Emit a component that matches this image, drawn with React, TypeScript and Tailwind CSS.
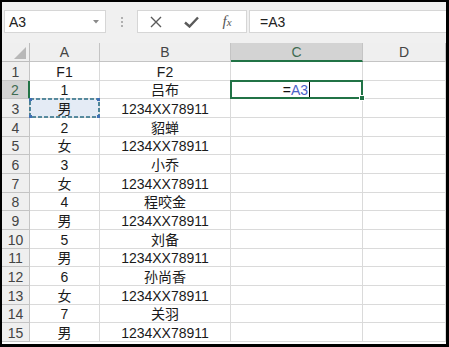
import React from 'react';

const rows: [string, string][] = [
  ['F1', 'F2'],
  ['1', '吕布'],
  ['男', '1234XX78911'],
  ['2', '貂蝉'],
  ['女', '1234XX78911'],
  ['3', '小乔'],
  ['女', '1234XX78911'],
  ['4', '程咬金'],
  ['男', '1234XX78911'],
  ['5', '刘备'],
  ['男', '1234XX78911'],
  ['6', '孙尚香'],
  ['女', '1234XX78911'],
  ['7', '关羽'],
  ['男', '1234XX78911'],
];

const cols = ['A', 'B', 'C', 'D'];

const Toolbar: React.FC = () => (
  <div className="h-[41px] bg-[#f0f0f0] flex items-start pt-[8px] pl-[2px] gap-0 shrink-0">
    <div className="w-[102px] h-[23px] bg-white border border-[#d6d6d6] flex items-center justify-between pl-[4px] pr-[6px]">
      <span className="text-[14px] text-[#222]">A3</span>
      <svg width="6" height="4" viewBox="0 0 6 4">
        <path d="M0 0 L6 0 L3 3.5 Z" fill="#8a8a8a" />
      </svg>
    </div>
    <div className="w-[31px] h-[23px] flex flex-col items-center justify-center gap-[2px]">
      <span className="w-[2px] h-[2px] bg-[#b0b0b0]" />
      <span className="w-[2px] h-[2px] bg-[#b0b0b0]" />
      <span className="w-[2px] h-[2px] bg-[#b0b0b0]" />
    </div>
    <div className="w-[110px] h-[23px] bg-white border border-[#d6d6d6] flex items-center">
      <div className="w-[36px] flex justify-center">
        <svg width="12" height="12" viewBox="0 0 12 12">
          <path d="M1 1 L11 11 M11 1 L1 11" stroke="#5a5a5a" strokeWidth="1.4" />
        </svg>
      </div>
      <div className="w-[34px] flex justify-center">
        <svg width="15" height="12" viewBox="0 0 15 12">
          <path d="M1 6.5 L5.5 10.5 L14 1.5" stroke="#5a5a5a" strokeWidth="2.4" fill="none" />
        </svg>
      </div>
      <div className="w-[38px] flex justify-center items-baseline font-['Liberation_Serif',serif] italic text-[#555]">
        <span className="text-[15px]">f</span>
        <span className="text-[11px]">x</span>
      </div>
    </div>
    <div className="ml-[2px] flex-1 h-[23px] bg-white border border-[#d6d6d6] border-r-0 flex items-center pl-[10px]">
      <span className="text-[14px] text-[#222]">=A3</span>
    </div>
  </div>
);

const App: React.FC = () => {
  const cell = 'border-r border-b border-[#dadada] flex items-center justify-center pt-[2px] text-[14px] text-[#1a1a1a] relative';
  const head = 'border-r border-b border-[#c4c4c4] bg-[#efefef] flex items-center justify-center text-[14px] text-[#444]';

  return (
    <div className="w-[449px] h-[347px] bg-white border-l-2 border-t-2 border-r-[3px] border-b-[3px] border-black overflow-hidden flex flex-col font-['Liberation_Sans','Noto_Sans_CJK_SC',sans-serif] leading-none">
      <Toolbar />
      <div className="grid grid-cols-[28px_70px_131px_132px_83px] grid-rows-[19px_repeat(15,18.67px)]">
        <div className="border-r border-b border-[#bdbdbd] bg-[#efefef] relative">
          <svg className="absolute right-[3px] bottom-[2px]" width="12" height="12" viewBox="0 0 12 12">
            <path d="M12 0 L12 12 L0 12 Z" fill="#b8b8b8" />
          </svg>
        </div>
        {cols.map((c) =>
          c === 'C' ? (
            <div key={c} className="bg-[#d3d3d3] border-r border-[#c4c4c4] border-b-2 border-b-[#217346] flex items-center justify-center text-[14px] text-[#3f6b52]">
              {c}
            </div>
          ) : (
            <div key={c} className={head}>{c}</div>
          )
        )}
        {rows.map(([a, b], i) => {
          const n = i + 1;
          return (
            <React.Fragment key={n}>
              {n === 2 ? (
                <div className="bg-[#d3d3d3] border-b border-[#c4c4c4] border-r-2 border-r-[#217346] flex items-center justify-center pt-[2px] text-[14px] text-[#3f6b52]">
                  {n}
                </div>
              ) : (
                <div className={`${head} pt-[2px]`}>{n}</div>
              )}
              <div className={`${cell} ${n === 3 ? 'bg-[#e4ebf5]' : ''}`}>
                {a}
                {n === 3 && (
                  <svg className="absolute -left-px -top-px z-10" width="71" height="20" viewBox="0 0 71 20">
                    <rect x="1" y="1" width="69" height="18" fill="none" stroke="#2a6e85" strokeWidth="1.6" strokeDasharray="4 2" />
                    <rect x="0" y="0" width="3" height="3" fill="#3f6fb5" />
                    <rect x="68" y="0" width="3" height="3" fill="#3f6fb5" />
                    <rect x="0" y="17" width="3" height="3" fill="#3f6fb5" />
                    <rect x="68" y="17" width="3" height="3" fill="#3f6fb5" />
                  </svg>
                )}
              </div>
              <div className={cell}>{b}</div>
              <div className={`${cell} ${n === 2 ? 'z-10' : ''}`}>
                {n === 2 && (
                  <>
                    <span className="text-[#111]">=</span>
                    <span className="text-[#4a63c8]">A3</span>
                    <span className="w-px h-[17px] bg-black ml-px -mt-[2px]" />
                    <div className="absolute -left-px -top-px -right-px -bottom-px border-2 border-[#217346]" />
                    <div className="absolute -right-[3px] -bottom-[3px] w-[6px] h-[6px] bg-[#217346] border border-white" />
                  </>
                )}
              </div>
              <div className={cell} />
            </React.Fragment>
          );
        })}
      </div>
    </div>
  );
};

export default App;
